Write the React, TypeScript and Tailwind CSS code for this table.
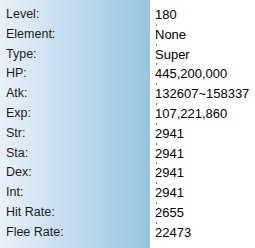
const stats: [string, string][] = [
  ['Level:', '180'],
  ['Element:', 'None'],
  ['Type:', 'Super'],
  ['HP:', '445,200,000'],
  ['Atk:', '132607~158337'],
  ['Exp:', '107,221,860'],
  ['Str:', '2941'],
  ['Sta:', '2941'],
  ['Dex:', '2941'],
  ['Int:', '2941'],
  ['Hit Rate:', '2655'],
  ['Flee Rate:', '22473'],
]

export default function App() {
  return (
    <div className="flex h-[248px] w-[255px] overflow-hidden bg-white font-['Liberation_Sans',Arial,sans-serif]">
      <div className="w-[150px] bg-gradient-to-r from-[#eaf1f8] to-[#97c4e0] pl-[6px] pt-[5px]">
        {stats.map(([label]) => (
          <div key={label} className="h-[19.8px] text-[12.5px] leading-[19.8px] text-[#1c1c1c]">
            {label}
          </div>
        ))}
      </div>
      <div className="flex-1 pl-[5px] pt-[5px]">
        {stats.map(([label, value], i) => (
          <div key={label} className="relative h-[19.8px] text-[13px] leading-[19.8px] text-black">
            {i > 0 && (
              <span
                className={
                  i === 1
                    ? 'absolute left-[1px] top-[-1px] h-[2px] w-[1px] bg-[#e0a060]'
                    : 'absolute left-[1px] top-[-1px] h-[2px] w-[1px] bg-[#3a8fd0]'
                }
              />
            )}
            {value}
          </div>
        ))}
      </div>
    </div>
  )
}
